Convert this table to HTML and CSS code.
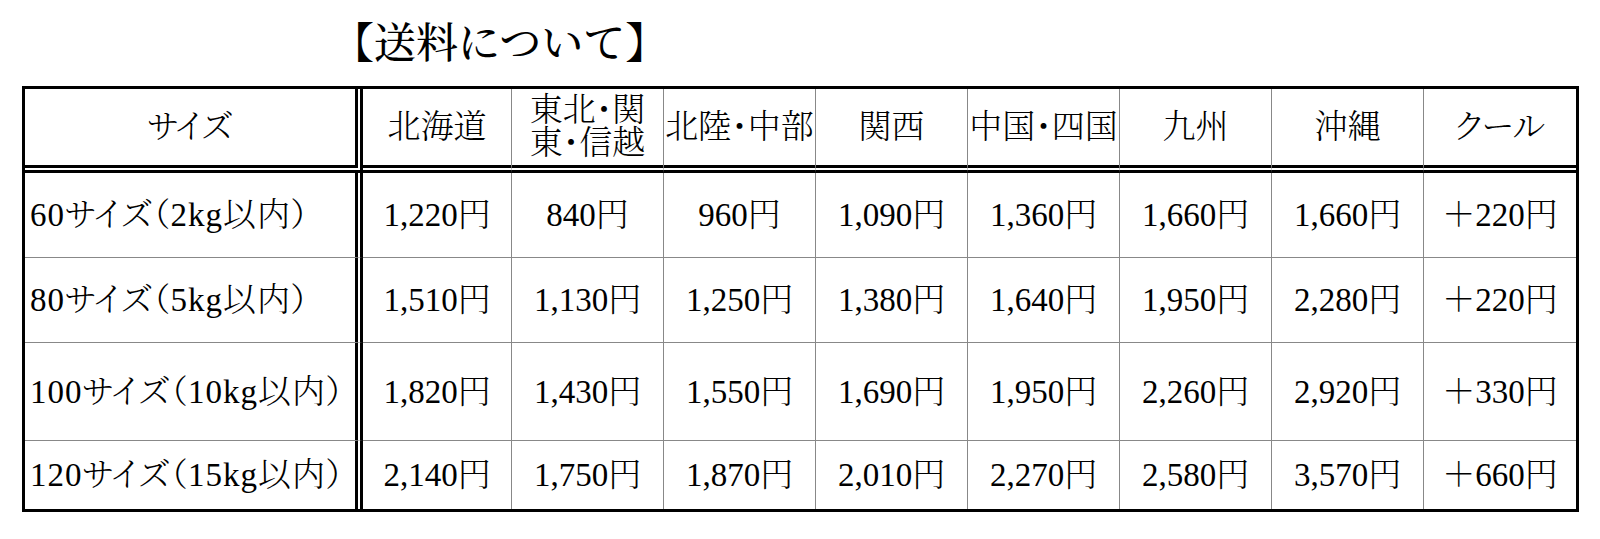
FILE: index.html
```html
<!DOCTYPE html>
<html lang="ja">
<head>
<meta charset="utf-8">
<title>送料について</title>
<link rel="stylesheet" href="styles.css">
</head>
<body>
<main class="page">
  <h1 class="title">【送料について】</h1>
  <table class="rates">
    <colgroup>
      <col class="col-size">
      <col class="col-first">
      <col class="col-reg"><col class="col-reg"><col class="col-reg"><col class="col-reg">
      <col class="col-reg"><col class="col-reg"><col class="col-reg">
    </colgroup>
    <thead>
      <tr class="row-head">
        <th class="tight">サイズ</th>
        <th>北海道</th>
        <th class="tight two-line">東北・関<br>東・信越</th>
        <th class="tight">北陸・中部</th>
        <th>関西</th>
        <th class="tight">中国・四国</th>
        <th>九州</th>
        <th>沖縄</th>
        <th class="tight">クール</th>
      </tr>
    </thead>
    <tbody>
      <tr class="row-a">
        <th class="label">60サイズ（2kg以内）</th>
        <td>1,220円</td><td>840円</td><td>960円</td><td>1,090円</td><td>1,360円</td><td>1,660円</td><td>1,660円</td><td>＋220円</td>
      </tr>
      <tr class="row-a">
        <th class="label">80サイズ（5kg以内）</th>
        <td>1,510円</td><td>1,130円</td><td>1,250円</td><td>1,380円</td><td>1,640円</td><td>1,950円</td><td>2,280円</td><td>＋220円</td>
      </tr>
      <tr class="row-b">
        <th class="label">100サイズ（10kg以内）</th>
        <td>1,820円</td><td>1,430円</td><td>1,550円</td><td>1,690円</td><td>1,950円</td><td>2,260円</td><td>2,920円</td><td>＋330円</td>
      </tr>
      <tr class="row-c">
        <th class="label">120サイズ（15kg以内）</th>
        <td>2,140円</td><td>1,750円</td><td>1,870円</td><td>2,010円</td><td>2,270円</td><td>2,580円</td><td>3,570円</td><td>＋660円</td>
      </tr>
    </tbody>
  </table>
</main>
</body>
</html>
```

FILE: styles.css
```css
* { box-sizing: border-box; }
html, body { margin: 0; background: #fff; }
body {
  font-family: "Liberation Serif", "Noto Serif CJK JP", "Noto Sans CJK JP", serif;
  color: #000;
}
.page { padding: 23px 0 0 22px; }
.title {
  margin: 0 0 21px 310px;
  height: 42px;
  font-size: 42px;
  line-height: 42px;
  font-weight: 500;
  white-space: nowrap;
}
.rates {
  border-collapse: separate;
  border-spacing: 0;
  table-layout: fixed;
  width: 1557px;
  border: 3px solid #000;
  font-size: 33px;
  line-height: 34px;
}
.col-size { width: 338px; }
.col-first { width: 149px; }
.col-reg { width: 152px; }
.rates th, .rates td {
  padding: 0;
  font-weight: 300;
  text-align: center;
  vertical-align: middle;
  border-right: 1px solid #888;
  border-bottom: 1px solid #888;
  white-space: nowrap;
  overflow: hidden;
}
.rates tr > :last-child { border-right: 0; }
.rates tbody tr:last-child > * { border-bottom: 0; }
.rates thead th { border-bottom: 8px double #000; }
.rates tr > :first-child { border-right: 8px double #000; }
.row-head { height: 84px; }
.row-a { height: 85px; }
.row-b { height: 98px; }
.row-c { height: 68px; }
.rates .tight { font-feature-settings: "palt"; }
.rates .label {
  text-align: left;
  padding-left: 5px;
  letter-spacing: 1px;
  font-feature-settings: "palt";
}
.rates .two-line { line-height: 33px; }
```
